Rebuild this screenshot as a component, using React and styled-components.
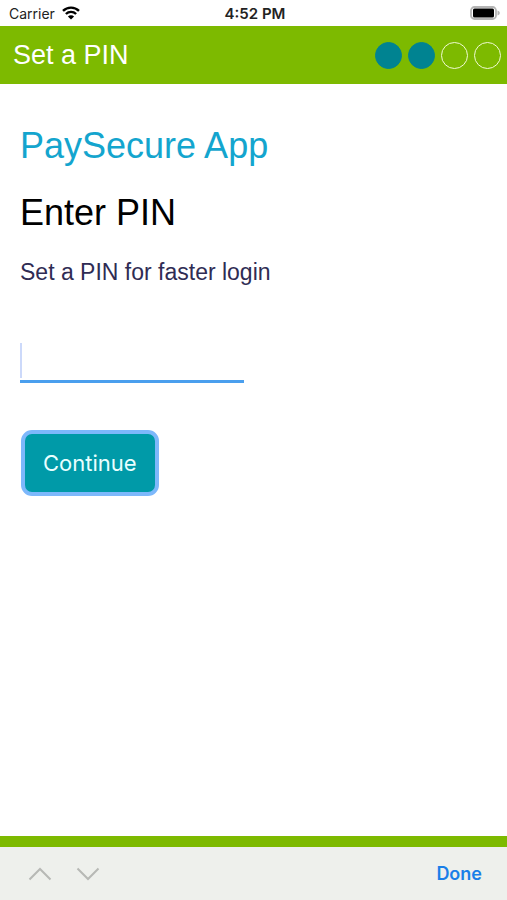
import React, { useState } from 'react';
import styled, { createGlobalStyle } from 'styled-components';

const GlobalStyle = createGlobalStyle`
  * {
    box-sizing: border-box;
  }
  body {
    margin: 0;
    background: #fff;
    font-family: "Liberation Sans", Arial, sans-serif;
  }
`;

const Page = styled.div`
  display: flex;
  flex-direction: column;
  min-height: 100vh;
`;

const StatusBar = styled.div`
  display: grid;
  grid-template-columns: 1fr auto 1fr;
  align-items: center;
  height: 26px;
  padding: 0 6px 0 9px;
  font-family: Inter, sans-serif;
  font-size: 14px;
  color: #222;
`;

const Carrier = styled.div`
  display: flex;
  align-items: center;
  gap: 7px;
`;

const Time = styled.div`
  font-size: 15px;
  font-weight: 600;
`;

const Battery = styled.svg`
  justify-self: end;
`;

const Header = styled.header`
  display: flex;
  align-items: center;
  justify-content: space-between;
  height: 58px;
  padding: 0 6px 0 13px;
  background: #7dba00;
`;

const HeaderTitle = styled.div`
  color: #fff;
  font-size: 27px;
  line-height: 32px;
`;

const Steps = styled.div`
  display: flex;
  gap: 6px;
`;

const Step = styled.span`
  width: 27px;
  height: 27px;
  border-radius: 50%;
  border: 1px solid ${(props) => (props.$done ? '#008391' : '#f0fad2')};
  background: ${(props) => (props.$done ? '#008391' : 'transparent')};
`;

const Main = styled.main`
  flex: 1;
  padding: 42px 20px 24px;
`;

const AppName = styled.h1`
  margin: 0 0 27px;
  font-size: 36px;
  font-weight: 400;
  line-height: 40px;
  color: #14a5ce;
`;

const Heading = styled.h2`
  margin: 0 0 25px;
  font-size: 36px;
  font-weight: 400;
  line-height: 40px;
  color: #000;
`;

const Label = styled.label`
  display: block;
  font-size: 23px;
  line-height: 28px;
  color: #2f2c54;
`;

const Field = styled.div`
  position: relative;
  width: 48%;
  min-width: 200px;
  margin: 56px 0 47px;

  &::before {
    content: '';
    display: ${(props) => (props.$empty ? 'block' : 'none')};
    position: absolute;
    top: 1px;
    left: 0;
    width: 2px;
    height: 35px;
    background: #ccd9fa;
  }
`;

const PinInput = styled.input`
  display: block;
  width: 100%;
  height: 41px;
  padding: 0 4px;
  border: none;
  border-bottom: 3px solid #4a9fee;
  border-radius: 0;
  outline: none;
  background: transparent;
  font-size: 28px;
`;

const ContinueButton = styled.button`
  display: block;
  height: 66px;
  margin-left: 1px;
  padding: 0 18px;
  border: 4px solid #7db8fb;
  border-radius: 11px;
  background: #009aa8;
  color: #e9ffff;
  font-family: Inter, sans-serif;
  font-size: 22px;
  cursor: pointer;
`;

const FooterLine = styled.div`
  height: 11px;
  background: #7dba00;
`;

const Toolbar = styled.div`
  display: flex;
  align-items: center;
  justify-content: space-between;
  height: 53px;
  padding: 0 25px 0 28px;
  background: #eef0ec;
`;

const Arrows = styled.div`
  display: flex;
  gap: 24px;
`;

const ArrowButton = styled.button`
  display: flex;
  padding: 0;
  border: none;
  background: none;
  color: #b7b9b5;
`;

const DoneButton = styled.button`
  padding: 0;
  border: none;
  background: none;
  color: #1a7fe8;
  font-family: Inter, sans-serif;
  font-size: 18px;
  font-weight: 600;
  cursor: pointer;
`;

const steps = [true, true, false, false];

const Chevron = ({ d }) => (
  <svg width="24" height="14" viewBox="0 0 24 14" fill="none" stroke="currentColor" strokeWidth="2">
    <path d={d} />
  </svg>
);

const App = () => {
  const [pin, setPin] = useState('');

  return (
    <Page>
      <GlobalStyle />
      <StatusBar>
        <Carrier>
          Carrier
          <svg width="18" height="14" viewBox="0 0 18 14" fill="none" stroke="#000" strokeWidth="2.4">
            <path d="M1 4.9a11.4 11.4 0 0 1 16 0" />
            <path d="M3.9 8a7.3 7.3 0 0 1 10.2 0" />
            <path d="M9 13.6 5.9 10.5a4.4 4.4 0 0 1 6.2 0z" fill="#000" stroke="none" />
          </svg>
        </Carrier>
        <Time>4:52 PM</Time>
        <Battery width="31" height="14" viewBox="0 0 31 14">
          <rect x="1" y="1" width="25" height="12" rx="3.5" fill="#fff" stroke="#b5b5b5" strokeWidth="1.8" />
          <rect x="3" y="2.5" width="21" height="9" rx="1.5" fill="#000" />
          <path d="M27.5 4.5c3 .9 3 4.1 0 5z" fill="#b5b5b5" />
        </Battery>
      </StatusBar>
      <Header>
        <HeaderTitle>Set a PIN</HeaderTitle>
        <Steps>
          {steps.map((done, index) => (
            <Step key={index} $done={done} />
          ))}
        </Steps>
      </Header>
      <Main>
        <AppName>PaySecure App</AppName>
        <Heading>Enter PIN</Heading>
        <Label htmlFor="pin">Set a PIN for faster login</Label>
        <Field $empty={pin === ''}>
          <PinInput
            id="pin"
            type="password"
            inputMode="numeric"
            value={pin}
            onChange={(e) => setPin(e.target.value)}
          />
        </Field>
        <ContinueButton type="button">Continue</ContinueButton>
      </Main>
      <FooterLine />
      <Toolbar>
        <Arrows>
          <ArrowButton type="button" aria-label="Previous field">
            <Chevron d="M1.5 12.5 12 2l10.5 10.5" />
          </ArrowButton>
          <ArrowButton type="button" aria-label="Next field">
            <Chevron d="M1.5 1.5 12 12 22.5 1.5" />
          </ArrowButton>
        </Arrows>
        <DoneButton type="button">Done</DoneButton>
      </Toolbar>
    </Page>
  );
};

export default App;
